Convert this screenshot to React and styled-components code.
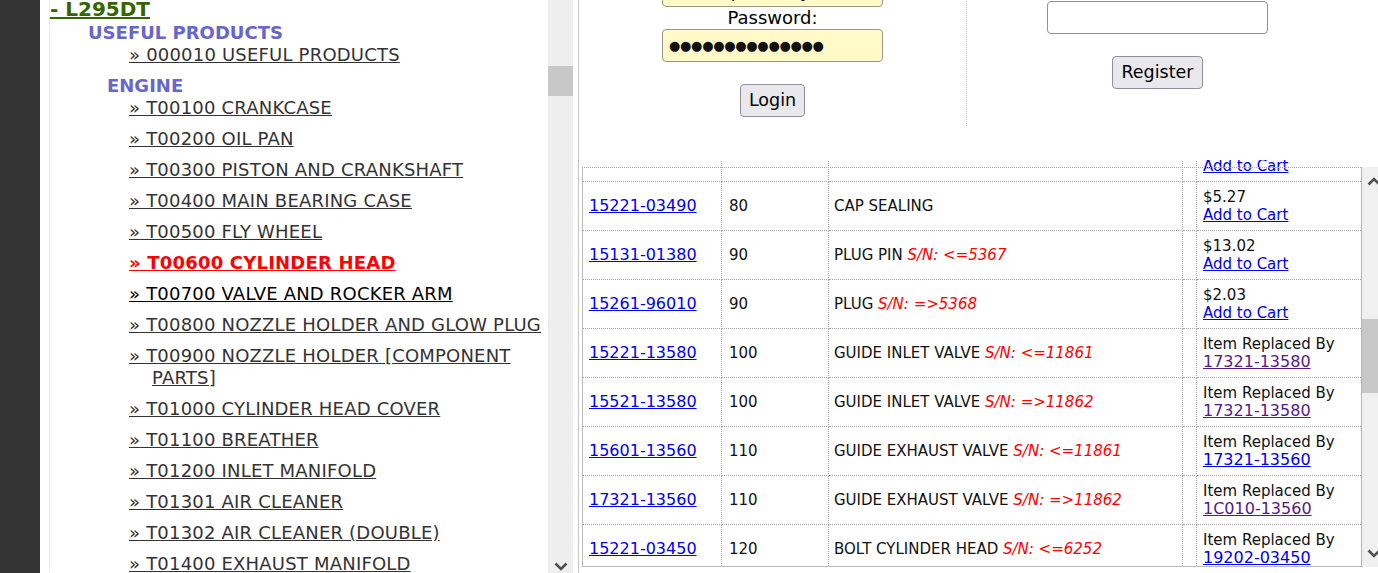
import React from 'react';
import styled, { createGlobalStyle } from 'styled-components';

const GlobalStyle = createGlobalStyle`
  html, body {
    margin: 0;
    padding: 0;
    width: 1378px;
    height: 573px;
    overflow: hidden;
    background: #fff;
  }
  body {
    font-family: "DejaVu Sans", Verdana, sans-serif;
  }
  #root { height: 573px; }
`;

const Page = styled.div`
  display: flex;
  width: 1378px;
  height: 573px;
  overflow: hidden;
`;

const DarkStrip = styled.div`
  flex: 0 0 40px;
  background: #333333;
`;

/* ---------- left catalog ---------- */

const LeftPanel = styled.aside`
  flex: 0 0 539px;
  box-sizing: border-box;
  display: flex;
  padding-right: 5px;
  border-right: 1px solid #c6c6c6;
  background: #fff;
`;

const Catalog = styled.nav`
  flex: 1;
  min-width: 0;
  overflow: hidden;
  padding-left: 9px;
`;

const CatalogInner = styled.div`
  border-left: 1px dotted #e4e4e4;
  min-height: 100%;
  font-family: "DejaVu Sans", Verdana, sans-serif;
`;

const ModelTitle = styled.a`
  display: block;
  margin-top: -2px;
  font-size: 20px;
  line-height: 22px;
  font-weight: 700;
  color: #336600;
  text-decoration: underline;
`;

const Section = styled.section`
  margin-top: ${(p) => p.$top}px;
`;

const SectionHeader = styled.div`
  padding-left: ${(p) => p.$indent}px;
  font-size: 18px;
  line-height: 22px;
  font-weight: 700;
  color: #6666cc;
`;

const ItemList = styled.ul`
  list-style: none;
  margin: 0;
  padding: 0 0 0 102px;
`;

const Item = styled.li`
  font-size: 18px;
  line-height: 22px;
  letter-spacing: 0.2px;
  text-indent: -23px;
  margin-bottom: 9px;
`;

const ItemLink = styled.a`
  color: ${(p) => (p.$active ? '#ff0000' : p.$visited ? '#000000' : '#333333')};
  font-weight: ${(p) => (p.$active ? 700 : 400)};
  text-decoration: underline;
`;

/* ---------- scrollbars ---------- */

const ScrollTrack = styled.div`
  flex: 0 0 ${(p) => p.$width}px;
  box-sizing: border-box;
  display: flex;
  flex-direction: column;
  background: ${(p) => p.$bg};
  border-left: ${(p) => (p.$bordered ? '1px solid #b4b4b4' : 'none')};
  margin-top: ${(p) => p.$top || 0}px;
  height: ${(p) => p.$height}px;
`;

const ScrollThumb = styled.div`
  background: #c8c8c8;
  flex: 0 0 auto;
`;

const ScrollSpacer = styled.div`
  flex: 1;
`;

const ArrowBox = styled.div`
  flex: 0 0 ${(p) => p.$h}px;
  display: flex;
  align-items: center;
  justify-content: center;
`;

function Chevron({ dir }) {
  const pts = dir === 'up' ? '1.5,7.5 7,2 12.5,7.5' : '1.5,1.5 7,7 12.5,1.5';
  return (
    <svg width="14" height="9" viewBox="0 0 14 9">
      <polyline points={pts} fill="none" stroke="#505050" strokeWidth="2.6" />
    </svg>
  );
}

/* ---------- right panel ---------- */

const RightPanel = styled.main`
  flex: 0 0 807px;
  display: flex;
  flex-direction: column;
  font-family: "DejaVu Sans", Verdana, sans-serif;
`;

const LoginRow = styled.div`
  display: flex;
  margin-top: -48px;
`;

const LoginCol = styled.form`
  flex: 0 0 387px;
  display: flex;
  flex-direction: column;
  align-items: center;
  padding-bottom: 9px;
  margin: 0;
`;

const RegisterCol = styled.div`
  flex: 0 0 382px;
  box-sizing: border-box;
  border-left: 1px dotted #c4c4c4;
  display: flex;
  flex-direction: column;
  align-items: center;
  padding-top: 27px;
`;

const FieldLabel = styled.label`
  font-size: 18px;
  line-height: 22px;
  color: #000;
`;

const TextInput = styled.input`
  box-sizing: border-box;
  width: 221px;
  height: 33px;
  margin: 0;
  padding: 0 6px;
  border: 1px solid ${(p) => (p.$autofill ? '#9a978a' : '#8f8f9d')};
  border-radius: 4px;
  background: ${(p) => (p.$autofill ? '#fffac8' : '#ffffff')};
  font-family: "DejaVu Sans", Verdana, sans-serif;
  font-size: ${(p) => (p.$mask ? '13px' : '18px')};
  letter-spacing: ${(p) => (p.$mask ? '-0.3px' : '0')};
  color: #111;
  outline: none;
`;

const FormButton = styled.button`
  box-sizing: border-box;
  margin-top: 22px;
  height: 33px;
  padding: 0 8px;
  border: 1px solid #8f8f9d;
  border-radius: 4px;
  background: #e9e9ed;
  color: #000;
  font-family: "DejaVu Sans", Verdana, sans-serif;
  font-size: 17.5px;
  line-height: 21px;
`;

const TableBox = styled.div`
  display: flex;
  margin-left: 3px;
  margin-top: 34px;
  height: 407px;
`;

const TableArea = styled.div`
  flex: 0 0 779px;
  box-sizing: border-box;
  position: relative;
  overflow: hidden;
  padding-left: 1px;
  border-bottom: 1px solid #bbbbbb;

  &::before {
    content: '';
    position: absolute;
    top: 7px;
    left: 0;
    right: 0;
    bottom: 0;
    border-top: 1px dotted #a8a8a8;
    border-left: 1px solid #bbbbbb;
    pointer-events: none;
  }
`;

const PartsTable = styled.table`
  border-collapse: separate;
  border-spacing: 0;
  table-layout: fixed;
  width: 778px;
  margin-top: -27px;
  font-size: 15px;
  line-height: 18px;
  color: #111;
`;

const Cell = styled.td`
  box-sizing: border-box;
  padding: 6px 4px 6px ${(p) => p.$padLeft || 6}px;
  border-bottom: 1px dotted #a8a8a8;
  border-right: ${(p) => (p.$last ? 'none' : '1px dotted #a8a8a8')};
  vertical-align: middle;
  white-space: nowrap;
  overflow: hidden;
`;

const PartLink = styled.a`
  font-size: 16px;
  color: ${(p) => (p.$visited ? '#551a8b' : '#0000ee')};
  text-decoration: underline;
`;

const CartLink = styled.a`
  display: block;
  color: #0000ee;
  text-decoration: underline;
`;

const Line = styled.div``;

const SerialNote = styled.span`
  color: #ff0000;
  font-style: italic;
`;

const catalogItems = [
  'T00100 CRANKCASE',
  'T00200 OIL PAN',
  'T00300 PISTON AND CRANKSHAFT',
  'T00400 MAIN BEARING CASE',
  'T00500 FLY WHEEL',
  'T00600 CYLINDER HEAD',
  'T00700 VALVE AND ROCKER ARM',
  'T00800 NOZZLE HOLDER AND GLOW PLUG',
  'T00900 NOZZLE HOLDER [COMPONENT PARTS]',
  'T01000 CYLINDER HEAD COVER',
  'T01100 BREATHER',
  'T01200 INLET MANIFOLD',
  'T01301 AIR CLEANER',
  'T01302 AIR CLEANER (DOUBLE)',
  'T01400 EXHAUST MANIFOLD',
  'T01500 MUFFLER',
];

const parts = [
  { no: '15221-03490', ref: '80', desc: 'CAP SEALING', price: '$5.27' },
  { no: '15131-01380', ref: '90', desc: 'PLUG PIN', sn: 'S/N: <=5367', price: '$13.02' },
  { no: '15261-96010', ref: '90', desc: 'PLUG', sn: 'S/N: =>5368', price: '$2.03' },
  { no: '15221-13580', ref: '100', desc: 'GUIDE INLET VALVE', sn: 'S/N: <=11861', repl: '17321-13580', visited: true },
  { no: '15521-13580', ref: '100', desc: 'GUIDE INLET VALVE', sn: 'S/N: =>11862', repl: '17321-13580', visited: true },
  { no: '15601-13560', ref: '110', desc: 'GUIDE EXHAUST VALVE', sn: 'S/N: <=11861', repl: '17321-13560' },
  { no: '17321-13560', ref: '110', desc: 'GUIDE EXHAUST VALVE', sn: 'S/N: =>11862', repl: '1C010-13560', visited: true },
  { no: '15221-03450', ref: '120', desc: 'BOLT CYLINDER HEAD', sn: 'S/N: <=6252', repl: '19202-03450' },
];

export default function App() {
  return (
    <>
      <GlobalStyle />
      <Page>
        <DarkStrip />
        <LeftPanel>
          <Catalog>
            <CatalogInner>
              <ModelTitle href="#">- L295DT</ModelTitle>
              <Section $top={2}>
                <SectionHeader $indent={38}>USEFUL PRODUCTS</SectionHeader>
                <ItemList>
                  <Item>
                    <ItemLink href="#">{'\u00bb 000010 USEFUL PRODUCTS'}</ItemLink>
                  </Item>
                </ItemList>
              </Section>
              <Section $top={0}>
                <SectionHeader $indent={57}>ENGINE</SectionHeader>
                <ItemList>
                  {catalogItems.map((t) => (
                    <Item key={t}>
                      <ItemLink
                        href="#"
                        $active={t === 'T00600 CYLINDER HEAD'}
                        $visited={t === 'T00700 VALVE AND ROCKER ARM'}
                      >
                        {'\u00bb ' + t}
                      </ItemLink>
                    </Item>
                  ))}
                </ItemList>
              </Section>
            </CatalogInner>
          </Catalog>
          <ScrollTrack $width={25} $bg="#eeeeee" $height={573}>
            <ScrollThumb style={{ marginTop: 66, height: 30 }} />
            <ScrollSpacer />
            <ArrowBox $h={13}>
              <Chevron dir="down" />
            </ArrowBox>
          </ScrollTrack>
        </LeftPanel>

        <RightPanel>
          <LoginRow>
            <LoginCol onSubmit={(e) => e.preventDefault()}>
              <FieldLabel>Username:</FieldLabel>
              <TextInput $autofill readOnly value="kubotapartsbuy" />
              <FieldLabel>Password:</FieldLabel>
              <TextInput $autofill $mask readOnly value={'\u25cf'.repeat(14)} />
              <FormButton type="button">Login</FormButton>
            </LoginCol>
            <RegisterCol>
              <FieldLabel>Register:</FieldLabel>
              <TextInput readOnly value="" />
              <FormButton type="button">Register</FormButton>
            </RegisterCol>
          </LoginRow>

          <TableBox>
            <TableArea>
              <PartsTable>
                <colgroup>
                  <col style={{ width: 139 }} />
                  <col style={{ width: 107 }} />
                  <col style={{ width: 354 }} />
                  <col style={{ width: 14 }} />
                  <col style={{ width: 164 }} />
                </colgroup>
                <tbody>
                  <tr>
                    <Cell />
                    <Cell />
                    <Cell />
                    <Cell />
                    <Cell $last>
                      <Line>$9.48</Line>
                      <CartLink href="#">Add to Cart</CartLink>
                    </Cell>
                  </tr>
                  {parts.map((p) => (
                    <tr key={p.no + p.sn}>
                      <Cell>
                        <PartLink href="#">{p.no}</PartLink>
                      </Cell>
                      <Cell $padLeft={7}>{p.ref}</Cell>
                      <Cell $padLeft={5}>
                        {p.desc}
                        {p.sn ? ' ' : ''}
                        {p.sn && <SerialNote>{p.sn}</SerialNote>}
                      </Cell>
                      <Cell />
                      <Cell $last>
                        {p.price ? (
                          <>
                            <Line>{p.price}</Line>
                            <CartLink href="#">Add to Cart</CartLink>
                          </>
                        ) : (
                          <>
                            <Line>Item Replaced By</Line>
                            <PartLink href="#" $visited={p.visited}>
                              {p.repl}
                            </PartLink>
                          </>
                        )}
                      </Cell>
                    </tr>
                  ))}
                </tbody>
              </PartsTable>
            </TableArea>
            <ScrollTrack $width={25} $bg="#f0f0f0" $bordered $top={7} $height={400}>
              <ArrowBox $h={28}>
                <Chevron dir="up" />
              </ArrowBox>
              <ScrollThumb style={{ marginTop: 124, height: 74 }} />
              <ScrollSpacer />
              <ArrowBox $h={28}>
                <Chevron dir="down" />
              </ArrowBox>
            </ScrollTrack>
          </TableBox>
        </RightPanel>
      </Page>
    </>
  );
}
